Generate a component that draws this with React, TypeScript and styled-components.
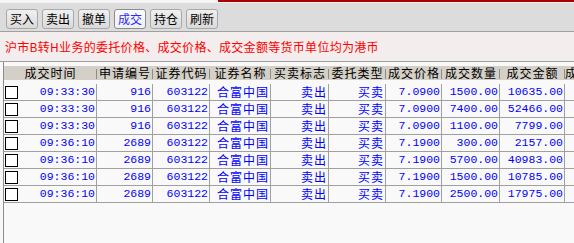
import React from "react";
import styled, { createGlobalStyle } from "styled-components";

const GlobalStyle = createGlobalStyle`
  html, body {
    margin: 0;
    padding: 0;
    background: #f8f8f8;
  }
`;

const CJK = `"Noto Sans CJK SC", "Noto Sans", sans-serif`;
const MONO = `"Liberation Mono", "Noto Sans CJK SC", monospace`;

const Page = styled.div`
  width: 574px;
  height: 243px;
  overflow: hidden;
  display: flex;
  flex-direction: column;
  background: #f8f8f8;
  font-family: ${CJK};
`;

const Toolbar = styled.div`
  height: 32px;
  box-sizing: border-box;
  display: flex;
  gap: 4px;
  padding: 9px 0 0 6px;
  background: linear-gradient(to right, #f6f6f6 218px, #a80000 218px) top / 100% 2px no-repeat,
    linear-gradient(#f2f2f2, #f2f2f2) 0 2px / 100% 1px no-repeat, #dcdcdc;
  border-bottom: 1px solid #a0a0a0;
`;

const ToolButton = styled.button<{ $active?: boolean }>`
  width: 32px;
  height: 20px;
  padding: 0;
  box-sizing: border-box;
  border: 1px solid ${(p) => (p.$active ? "#8c8c8c" : "#a8a8a8")};
  border-radius: 3px;
  background: ${(p) =>
    p.$active ? "linear-gradient(#fbfbfb, #f0f0f0)" : "linear-gradient(#f0f0f0, #dadada)"};
  color: ${(p) => (p.$active ? "#2a2aff" : "#000")};
  font-family: ${CJK};
  font-size: 12px;
  line-height: 18px;
  cursor: pointer;
`;

const Notice = styled.div`
  height: 29px;
  display: flex;
  align-items: center;
  padding-left: 5px;
  background: #f3eded;
  border-bottom: 1px solid #a0a0a0;
  color: #ff0000;
  font-size: 12px;
  letter-spacing: 0.3px;
`;

const TableArea = styled.div`
  flex: 1;
  margin-left: 3px;
  padding-top: 4px;
  border-left: 1px solid #8c8c8c;
  background: #f9f9f9;
`;

const COLS = "93px 56px 57px 61px 58px 57px 56px 58px 65px 1fr";

const HeaderRow = styled.div`
  display: grid;
  grid-template-columns: ${COLS};
  height: 14px;
  background: #d4d0c8;
  margin-bottom: 4px;
`;

const HeaderCell = styled.div<{ $sep?: boolean }>`
  position: relative;
  display: flex;
  align-items: center;
  justify-content: center;
  white-space: nowrap;
  font-size: 12px;
  letter-spacing: 1px;
  line-height: 14px;
  color: #000;
  &::after {
    content: "";
    display: ${(p) => (p.$sep ? "block" : "none")};
    position: absolute;
    right: 0;
    top: 3px;
    bottom: 1px;
    width: 1px;
    background: #8c8c8c;
  }
`;

const Row = styled.div`
  display: grid;
  grid-template-columns: ${COLS};
  height: 17px;
  box-sizing: border-box;
  border-bottom: 1px solid #a0a0a0;
`;

const Cell = styled.div<{ $cjk?: boolean }>`
  display: flex;
  align-items: center;
  justify-content: flex-end;
  padding-right: 1px;
  border-right: 1px solid #a0a0a0;
  color: #0000ff;
  white-space: nowrap;
  font-family: ${(p) => (p.$cjk ? CJK : MONO)};
  font-size: ${(p) => (p.$cjk ? "12px" : "11.5px")};
  letter-spacing: ${(p) => (p.$cjk ? "1px" : "0")};
  line-height: 16px;
`;

const FirstCell = styled(Cell)`
  justify-content: space-between;
  padding-left: 1px;
`;

const Check = styled.span`
  width: 13px;
  height: 13px;
  box-sizing: border-box;
  border: 1px solid #000;
  background: #fff;
  flex: none;
`;

const EmptyCell = styled.div``;

const buttons = ["买入", "卖出", "撤单", "成交", "持仓", "刷新"];
const headers = [
  "成交时间",
  "申请编号",
  "证券代码",
  "证券名称",
  "买卖标志",
  "委托类型",
  "成交价格",
  "成交数量",
  "成交金额",
  "成交编号",
];

const rows = [
  ["09:33:30", "916", "603122", "合富中国", "卖出", "买卖", "7.0900", "1500.00", "10635.00"],
  ["09:33:30", "916", "603122", "合富中国", "卖出", "买卖", "7.0900", "7400.00", "52466.00"],
  ["09:33:30", "916", "603122", "合富中国", "卖出", "买卖", "7.0900", "1100.00", "7799.00"],
  ["09:36:10", "2689", "603122", "合富中国", "卖出", "买卖", "7.1900", "300.00", "2157.00"],
  ["09:36:10", "2689", "603122", "合富中国", "卖出", "买卖", "7.1900", "5700.00", "40983.00"],
  ["09:36:10", "2689", "603122", "合富中国", "卖出", "买卖", "7.1900", "1500.00", "10785.00"],
  ["09:36:10", "2689", "603122", "合富中国", "卖出", "买卖", "7.1900", "2500.00", "17975.00"],
];

const cjkCols = new Set([3, 4, 5]);

export default function App() {
  return (
    <Page>
      <GlobalStyle />
      <Toolbar>
        {buttons.map((b) => (
          <ToolButton key={b} $active={b === "成交"}>
            {b}
          </ToolButton>
        ))}
      </Toolbar>
      <Notice>沪市B转H业务的委托价格、成交价格、成交金额等货币单位均为港币</Notice>
      <TableArea>
        <HeaderRow>
          {headers.map((h, i) => (
            <HeaderCell key={h} $sep={i < headers.length - 1}>
              {h}
            </HeaderCell>
          ))}
        </HeaderRow>
        {rows.map((r, ri) => (
          <Row key={ri}>
            <FirstCell>
              <Check />
              {r[0]}
            </FirstCell>
            {r.slice(1).map((v, ci) => (
              <Cell key={ci} $cjk={cjkCols.has(ci + 1)}>
                {v}
              </Cell>
            ))}
            <EmptyCell />
          </Row>
        ))}
      </TableArea>
    </Page>
  );
}
